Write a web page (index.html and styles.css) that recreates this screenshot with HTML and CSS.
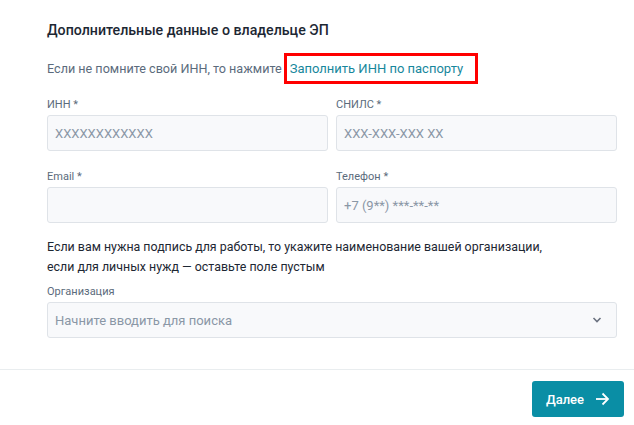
FILE: index.html
```html
<!DOCTYPE html>
<html lang="ru">
<head>
    <meta charset="UTF-8">
    <meta name="viewport" content="width=device-width, initial-scale=1.0">
    <title>Данные владельца ЭП</title>
    <link rel="stylesheet" href="styles.css">
</head>
<body>
    <div id="formBox">
        <p class="sectionTitle">Дополнительные данные о владельце ЭП</p>
        <div class="hintLine">
            <span>Если не помните свой ИНН, то нажмите</span>
            <a class="fillLink" href="#">Заполнить ИНН по паспорту</a>
        </div>

        <div class="fieldGrid">
            <div class="field">
                <label class="fieldLabel">ИНН *</label>
                <div class="fieldInput placeholder">XXXXXXXXXXXX</div>
            </div>
            <div class="field">
                <label class="fieldLabel">СНИЛС *</label>
                <div class="fieldInput placeholder">XXX-XXX-XXX XX</div>
            </div>
            <div class="field">
                <label class="fieldLabel">Email *</label>
                <div class="fieldInput"></div>
            </div>
            <div class="field">
                <label class="fieldLabel">Телефон *</label>
                <div class="fieldInput placeholder">+7 (9**) ***-**-**</div>
            </div>
        </div>

        <p class="orgText">Если вам нужна подпись для работы, то укажите наименование вашей организации,<br>если для личных нужд — оставьте поле пустым</p>

        <div class="field">
            <label class="fieldLabel">Организация</label>
            <div class="fieldInput selectInput">
                <span class="placeholder">Начните вводить для поиска</span>
                <svg class="chevron" width="10" height="6" viewBox="0 0 10 6">
                    <polyline points="1.5,1 5,4.5 8.5,1" fill="none" stroke="#6b7280" stroke-width="1.6"/>
                </svg>
            </div>
        </div>
    </div>

    <div id="footerBar">
        <button class="nextButton">
            Далее
            <svg width="16" height="16" viewBox="0 0 16 16">
                <line x1="2" y1="8" x2="14" y2="8" stroke="#fff" stroke-width="1.8"/>
                <polyline points="8.5,2.5 14,8 8.5,13.5" fill="none" stroke="#fff" stroke-width="1.8"/>
            </svg>
        </button>
    </div>
</body>
</html>
```

FILE: styles.css
```css
body{
    margin: 0;
    padding: 0;
    background-color: #ffffff;
    font-family: Roboto, "Noto Sans", sans-serif;
    color: #1d2733;
}

#formBox{
    width: 570px;
    padding: 20px 0 0 47px;
}

.sectionTitle{
    margin: 0;
    font-size: 14.2px;
    font-weight: 500;
    line-height: 20px;
}

.hintLine{
    display: flex;
    align-items: center;
    margin-top: 13px;
    height: 31px;
    font-size: 12.6px;
    color: #5b6b7c;
}

.fillLink{
    margin-left: 2px;
    border: 3px solid #ff0000;
    padding: 3px 12px 3px 3px;
    line-height: 19px;
    font-size: 13px;
    color: #17879c;
    text-decoration: none;
}

.fieldGrid{
    display: grid;
    grid-template-columns: 1fr 1fr;
    column-gap: 8px;
    row-gap: 18px;
    margin-top: 13px;
}

.field{
    display: flex;
    flex-direction: column;
}

.fieldLabel{
    font-size: 11px;
    line-height: 15px;
    color: #5b6b7c;
    margin-bottom: 3px;
}

.fieldInput{
    box-sizing: border-box;
    height: 36px;
    border: 1px solid #dfe3e8;
    border-radius: 3px;
    background-color: #f8f9fb;
    padding: 0 7px;
    display: flex;
    align-items: center;
    font-size: 13px;
}

.placeholder{
    color: #8a97a6;
}

.selectInput{
    justify-content: space-between;
}

.chevron{
    margin-right: 7px;
}

.orgText{
    margin: 14px 0 7px 0;
    font-size: 12.4px;
    line-height: 20px;
    color: #1d2733;
}

#footerBar{
    margin-top: 31px;
    border-top: 1px solid #e9edef;
    padding: 11px 10px 0 0;
    display: flex;
    justify-content: flex-end;
}

.nextButton{
    width: 92px;
    height: 36px;
    border: none;
    border-radius: 3px;
    background-color: #0a8ea5;
    color: #ffffff;
    font-family: Roboto, "Noto Sans", sans-serif;
    font-size: 13px;
    font-weight: 500;
    display: flex;
    align-items: center;
    justify-content: center;
    gap: 10px;
}
```
